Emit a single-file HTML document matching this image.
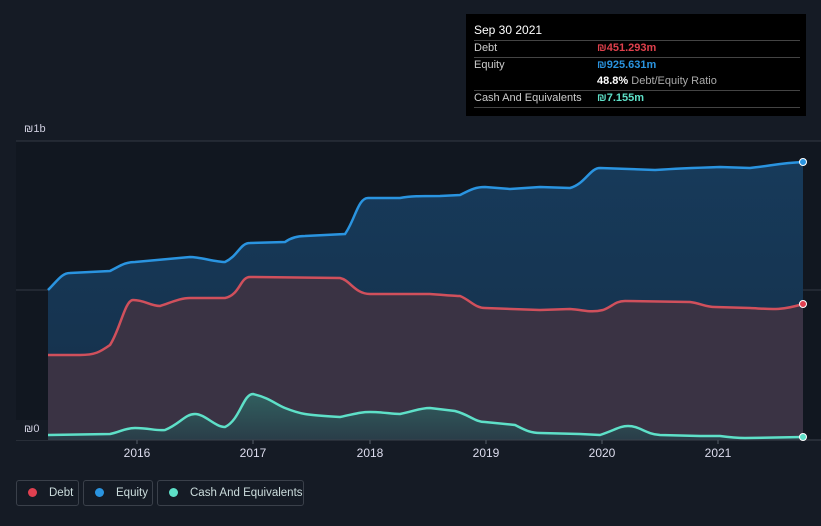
<!DOCTYPE html>
<html><head><meta charset="utf-8"><style>
body{margin:0;width:821px;height:526px;background:#151b25;font-family:"Liberation Sans",sans-serif;overflow:hidden;position:relative}
.tt{position:absolute;left:466px;top:14px;width:340px;height:102px;background:#000;color:#ccc;font-size:11px}
.tt .r{position:absolute;left:8px;width:326px;border-top:1px solid #444}
.tt div{white-space:nowrap}
.lg{position:absolute;top:480px;height:26px;border:1px solid #3a404a;border-radius:3px;color:#cdd;font-size:11.5px;line-height:24px;box-sizing:border-box;white-space:nowrap}
.lg i{display:inline-block;width:9px;height:9px;border-radius:50%;margin:0 12px 0 11px;vertical-align:-1px}
</style></head><body>
<svg width="821" height="526" style="position:absolute;left:0;top:0">
<defs>
<linearGradient id="eg" x1="0" y1="0" x2="0" y2="1"><stop offset="0" stop-color="#173a5a"/><stop offset="1" stop-color="#15304a"/></linearGradient>
<linearGradient id="cg" x1="0" y1="0" x2="0" y2="1"><stop offset="0" stop-color="#2f6a66"/><stop offset="1" stop-color="#26404a"/></linearGradient>
</defs>
<rect x="16" y="141" width="805" height="299" fill="#111720"/>
<line x1="16" y1="141" x2="821" y2="141" stroke="#333a44"/>
<line x1="16" y1="290" x2="821" y2="290" stroke="#333a44"/>
<path d="M48,290 C58,280 62,273 70,273 L110,271 C120,266 125,262 135,262 L190,257 C200,257 215,262 225,262 C238,256 240,243 250,243 L285,242 C292,237 300,236 305,236 L345,234 C355,220 358,198 368,198 L400,198 C410,196 420,196 440,196 L460,195 C470,190 475,187 485,187 L510,189 L540,187 L570,188 C585,184 590,168 600,168 L655,170 C670,169 690,168 720,167 L750,168 C770,166 780,163 803,162 L803,440 L48,440Z" fill="url(#eg)"/>
<path d="M48,355 L80,355 C95,355 100,352 110,345 C120,330 125,300 133,300 C145,300 150,306 160,306 C170,303 180,298 190,298 L225,298 C240,295 240,277 250,277 L340,278 C350,280 355,294 370,294 L430,294 C445,295 455,296 460,296 C470,300 475,308 485,308 L540,310 L570,309 C585,310 590,313 603,310 C612,307 615,301 625,301 L690,302 C700,303 705,307 715,307 L750,308 C770,309 780,311 803,304 L803,440 L48,440Z" fill="#3a3344"/>
<path d="M48,435 L110,434 C120,432 125,428 135,428 C150,428 155,431 165,430 C180,424 185,414 195,414 C205,414 215,427 225,427 C240,420 243,394 253,394 C270,398 275,404 285,408 C300,414 305,415 340,417 C355,414 360,412 370,412 C385,412 390,414 400,414 C415,411 420,408 430,408 L455,411 C470,415 475,422 485,422 L515,425 C525,430 530,433 540,433 L580,434 L600,435 C615,430 620,426 628,426 C640,426 645,434 660,435 L700,436 L720,436 C735,438 740,438 745,438 L803,437 L803,440 L48,440Z" fill="url(#cg)" opacity="0.8"/>
<path d="M48,290 C58,280 62,273 70,273 L110,271 C120,266 125,262 135,262 L190,257 C200,257 215,262 225,262 C238,256 240,243 250,243 L285,242 C292,237 300,236 305,236 L345,234 C355,220 358,198 368,198 L400,198 C410,196 420,196 440,196 L460,195 C470,190 475,187 485,187 L510,189 L540,187 L570,188 C585,184 590,168 600,168 L655,170 C670,169 690,168 720,167 L750,168 C770,166 780,163 803,162" fill="none" stroke="#2a94e0" stroke-width="2.5"/>
<path d="M48,355 L80,355 C95,355 100,352 110,345 C120,330 125,300 133,300 C145,300 150,306 160,306 C170,303 180,298 190,298 L225,298 C240,295 240,277 250,277 L340,278 C350,280 355,294 370,294 L430,294 C445,295 455,296 460,296 C470,300 475,308 485,308 L540,310 L570,309 C585,310 590,313 603,310 C612,307 615,301 625,301 L690,302 C700,303 705,307 715,307 L750,308 C770,309 780,311 803,304" fill="none" stroke="#d0505c" stroke-width="2.5"/>
<path d="M48,435 L110,434 C120,432 125,428 135,428 C150,428 155,431 165,430 C180,424 185,414 195,414 C205,414 215,427 225,427 C240,420 243,394 253,394 C270,398 275,404 285,408 C300,414 305,415 340,417 C355,414 360,412 370,412 C385,412 390,414 400,414 C415,411 420,408 430,408 L455,411 C470,415 475,422 485,422 L515,425 C525,430 530,433 540,433 L580,434 L600,435 C615,430 620,426 628,426 C640,426 645,434 660,435 L700,436 L720,436 C735,438 740,438 745,438 L803,437" fill="none" stroke="#5ee0c8" stroke-width="2.5"/>
<line x1="16" y1="440" x2="821" y2="440" stroke="#3a414b"/>
<rect x="16" y="420" width="32" height="20" fill="#151b25"/>
<g stroke="#555c66"><line x1="137" y1="440" x2="137" y2="444"/><line x1="253" y1="440" x2="253" y2="444"/><line x1="370" y1="440" x2="370" y2="444"/><line x1="486" y1="440" x2="486" y2="444"/><line x1="602" y1="440" x2="602" y2="444"/><line x1="718" y1="440" x2="718" y2="444"/></g>
<circle cx="803" cy="162" r="3.5" fill="#2a94e0" stroke="#fff" stroke-width="1"/>
<circle cx="803" cy="304" r="3.5" fill="#e04050" stroke="#fff" stroke-width="1"/>
<circle cx="803" cy="437" r="3.5" fill="#5ee0c8" stroke="#fff" stroke-width="1"/>
<g fill="#dde" font-size="12" font-family="Liberation Sans" text-anchor="middle"><text x="137" y="457">2016</text><text x="253" y="457">2017</text><text x="370" y="457">2018</text><text x="486" y="457">2019</text><text x="602" y="457">2020</text><text x="718" y="457">2021</text></g>
<g fill="#ccd" font-size="11" font-family="Liberation Sans"><text x="24" y="132">₪1b</text><text x="24" y="432">₪0</text></g>
</svg>
<div class="tt">
<div style="position:absolute;left:8px;top:9px;color:#fff;font-size:12px">Sep 30 2021</div>
<div class="r" style="top:26px"></div>
<div style="position:absolute;left:8px;top:28px">Debt</div><div style="position:absolute;left:131px;top:28px;color:#e0404c;font-weight:bold">₪451.293m</div>
<div class="r" style="top:43px"></div>
<div style="position:absolute;left:8px;top:45px">Equity</div><div style="position:absolute;left:131px;top:45px;color:#2a94e0;font-weight:bold">₪925.631m</div>
<div style="position:absolute;left:131px;top:61px;color:#aaa"><b style="color:#fff">48.8%</b> Debt/Equity Ratio</div>
<div class="r" style="top:76px"></div>
<div style="position:absolute;left:8px;top:78px">Cash And Equivalents</div><div style="position:absolute;left:131px;top:78px;color:#5ee0c8;font-weight:bold">₪7.155m</div>
<div class="r" style="top:93px"></div>
</div>
<div class="lg" style="left:16px;width:63px"><i style="background:#e04050"></i>Debt</div>
<div class="lg" style="left:83px;width:70px"><i style="background:#2a94e0"></i>Equity</div>
<div class="lg" style="left:157px;width:147px"><i style="background:#5ee0c8"></i>Cash And Equivalents</div>
</body></html>
